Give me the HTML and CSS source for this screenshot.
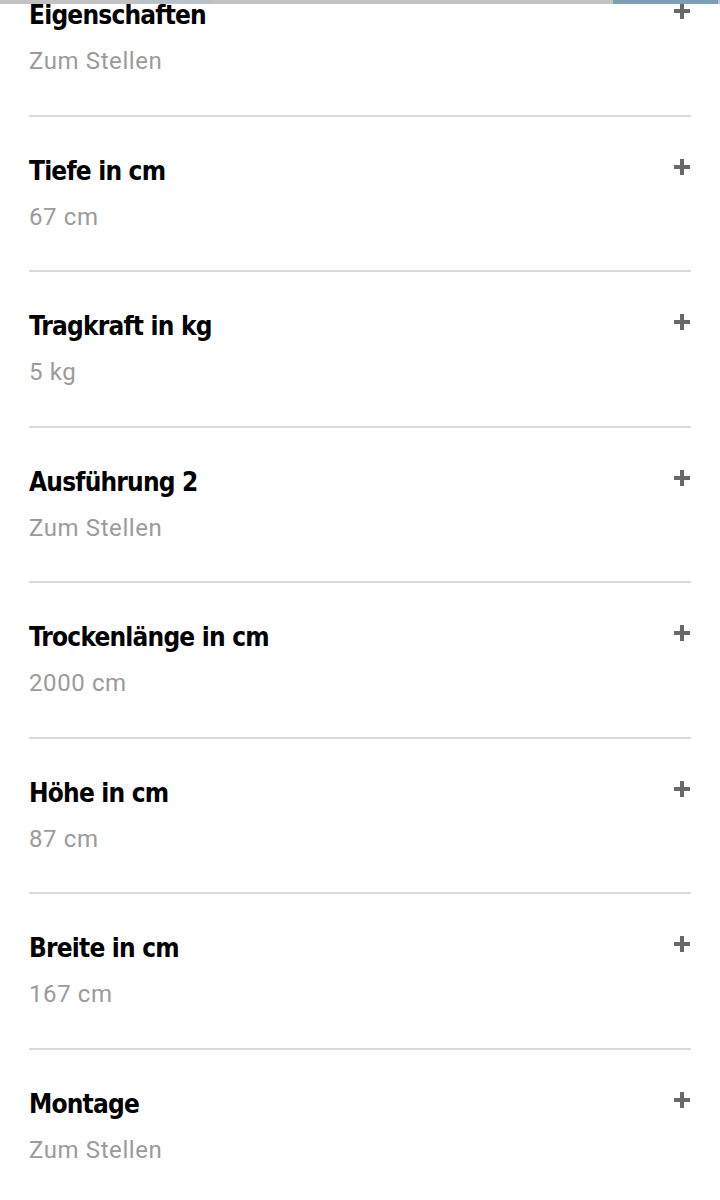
FILE: index.html
```html
<!DOCTYPE html>
<html>
<head>
<meta charset="utf-8">
<link rel="stylesheet" href="styles.css">
</head>
<body>
<div class="topbar">
  <div class="tab-left"></div>
  <div class="tab-right"></div>
</div>

<ul class="facets">
  <li class="facet">
    <div class="facet-text">
      <div class="facet-title">Eigenschaften</div>
      <div class="facet-value">Zum Stellen</div>
    </div>
    <span class="plus"></span>
  </li>
  <li class="facet">
    <div class="facet-text">
      <div class="facet-title">Tiefe in cm</div>
      <div class="facet-value">67 cm</div>
    </div>
    <span class="plus"></span>
  </li>
  <li class="facet">
    <div class="facet-text">
      <div class="facet-title">Tragkraft in kg</div>
      <div class="facet-value">5 kg</div>
    </div>
    <span class="plus"></span>
  </li>
  <li class="facet">
    <div class="facet-text">
      <div class="facet-title">Ausführung 2</div>
      <div class="facet-value">Zum Stellen</div>
    </div>
    <span class="plus"></span>
  </li>
  <li class="facet">
    <div class="facet-text">
      <div class="facet-title">Trockenlänge in cm</div>
      <div class="facet-value">2000 cm</div>
    </div>
    <span class="plus"></span>
  </li>
  <li class="facet">
    <div class="facet-text">
      <div class="facet-title">Höhe in cm</div>
      <div class="facet-value">87 cm</div>
    </div>
    <span class="plus"></span>
  </li>
  <li class="facet">
    <div class="facet-text">
      <div class="facet-title">Breite in cm</div>
      <div class="facet-value">167 cm</div>
    </div>
    <span class="plus"></span>
  </li>
  <li class="facet">
    <div class="facet-text">
      <div class="facet-title">Montage</div>
      <div class="facet-value">Zum Stellen</div>
    </div>
    <span class="plus"></span>
  </li>
</ul>
</body>
</html>
```

FILE: styles.css
```css
body {
  margin: 0;
  background: #fff;
  font-family: Roboto, "Liberation Sans", sans-serif;
  overflow: hidden;
}

/* sticky header, only its bottom edge is still visible */
.topbar {
  position: fixed;
  top: 0;
  left: 0;
  right: 0;
  height: 4px;
  background: #c2c2c2;
  z-index: 5;
}

.tab-left {
  position: absolute;
  left: 137px;
  width: 75px;
  top: 0;
  height: 3px;
  background: #b7c0c8;
  border-radius: 0 0 3px 3px;
}

.tab-right {
  position: absolute;
  left: 613px;
  right: 2px;
  top: 0;
  height: 4px;
  background: #7b9fb6;
}

.facets {
  list-style: none;
  margin: -39px 29px 0 29px;
  padding: 0;
}

.facet {
  display: flex;
  align-items: flex-start;
  justify-content: space-between;
  padding: 38px 0 0 0;
  height: 115.5px;
  border-bottom: 2px solid #dadada;
}

.facet-title {
  font-family: "DejaVu Sans Condensed", "DejaVu Sans", sans-serif;
  font-weight: bold;
  font-size: 26px;
  line-height: 32px;
  color: #000;
  letter-spacing: -0.8px;
}

.facet-value {
  font-size: 24px;
  line-height: 32px;
  margin-top: 14px;
  color: #9b9b9b;
  letter-spacing: 0.6px;
}

.plus {
  position: relative;
  width: 16px;
  height: 16px;
  margin: 4px 1px 0 0;
}

.plus:before,
.plus:after {
  content: '';
  position: absolute;
  background: #696969;
}

.plus:before {
  left: 0;
  right: 0;
  top: 6px;
  height: 4px;
}

.plus:after {
  top: 0;
  bottom: 0;
  left: 6px;
  width: 4px;
}
```
